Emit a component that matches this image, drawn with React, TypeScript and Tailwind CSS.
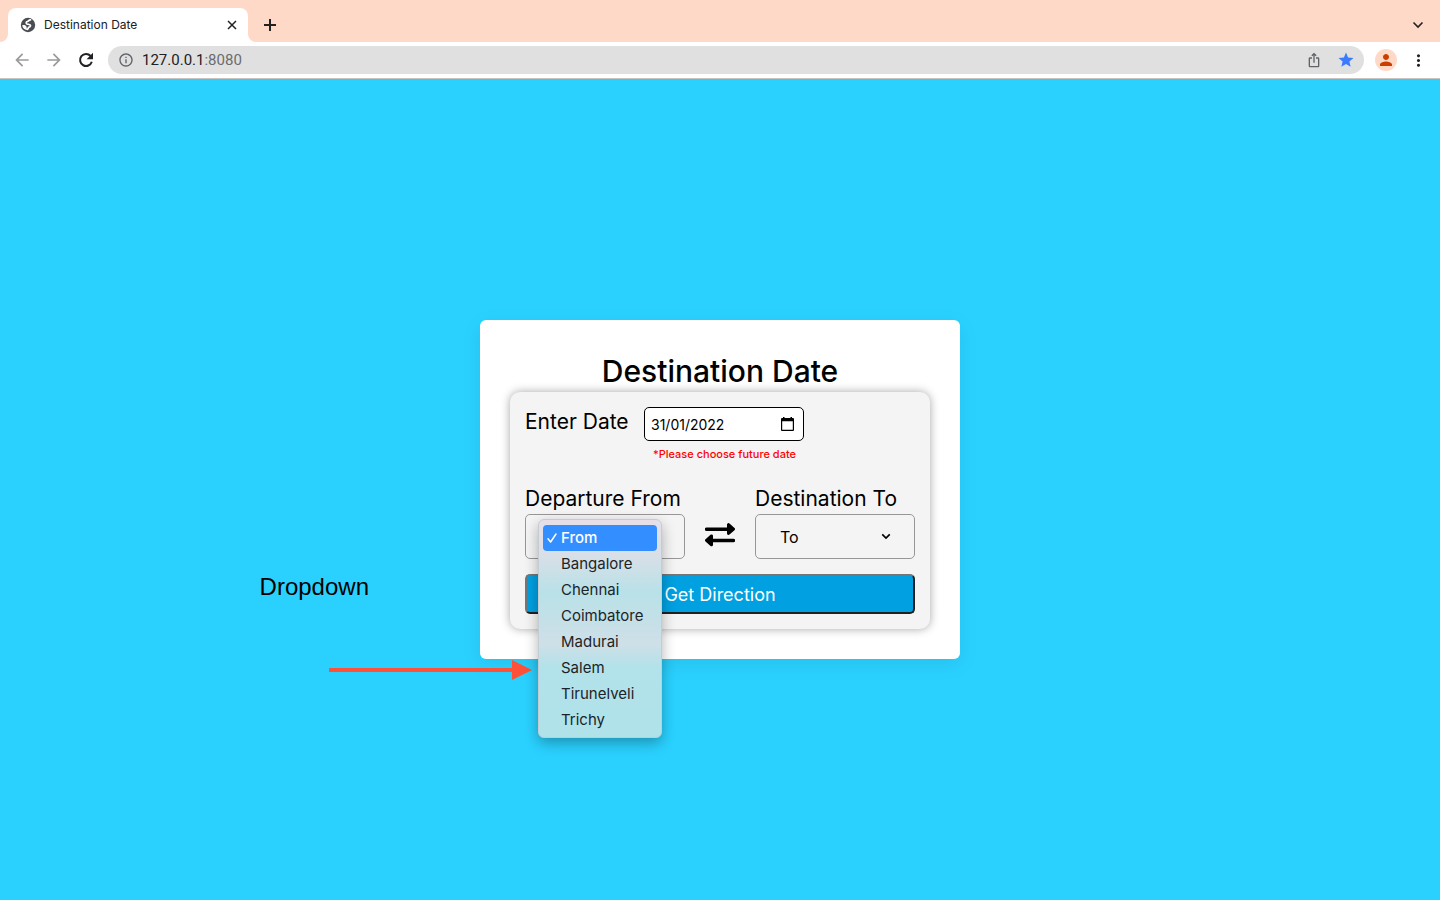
import { useState } from "react";
import { MdArrowBack, MdArrowForward, MdInfoOutline, MdIosShare, MdMoreVert, MdPerson, MdStar } from "react-icons/md";

const cities = ["Bangalore", "Chennai", "Coimbatore", "Madurai", "Salem", "Tirunelveli", "Trichy"];

function Chevron({ className }: { className: string }) {
  return (
    <svg viewBox="0 0 12 8" fill="none" stroke="currentColor" strokeWidth="2" className={className} aria-hidden="true">
      <path d="M1.5 1.5 6 6l4.500-4.500" />
    </svg>
  );
}

function TabStrip() {
  return (
    <div className="flex h-[42px] items-end bg-[#ffd9c7] pr-4">
      <svg viewBox="0 0 8 8" className="size-2 fill-white" aria-hidden="true">
        <path d="M8 0v8H0a8 8 0 0 0 8-8Z" />
      </svg>
      <div className="flex h-[34px] w-60 items-center rounded-t-lg bg-white pl-3 pr-[11px]">
        <svg viewBox="0 0 16 16" className="size-4" aria-hidden="true">
          <circle cx="8" cy="8" r="7.200" fill="#4a4d52" />
          <path
            d="M10.500 2.800C9 2.600 8.700 4.300 7.400 4.500 6 4.700 5.800 6.200 7 6.900c1 .5 2.500.2 3.300 1.200.6.900-.2 1.800-1.200 2-.900.2-.9 1.500-1.600 2.300"
            fill="none"
            stroke="#fff"
            strokeWidth="1.700"
            strokeLinecap="round"
          />
          <path d="M2.200 8.300c1.500-.5 3.200-.2 4 .9.700 1 .3 2.400 1.200 3.700-2.900.2-5-1.900-5.200-4.600Z" fill="#fff" />
        </svg>
        <span className="ml-2 flex-1 font-['Inter',sans-serif] text-[12px] text-[#202124]">Destination Date</span>
        <button type="button" aria-label="Close tab">
          <svg viewBox="0 0 10 10" className="size-[10px] stroke-[#202124]" strokeWidth="1.500" aria-hidden="true">
            <path d="m1 1 8 8M9 1 1 9" />
          </svg>
        </button>
      </div>
      <svg viewBox="0 0 8 8" className="size-2 fill-white" aria-hidden="true">
        <path d="M0 0v8h8a8 8 0 0 1-8-8Z" />
      </svg>
      <div className="flex h-[34px] flex-1 items-center justify-between pl-2">
        <button type="button" aria-label="New tab">
          <svg viewBox="0 0 12 12" className="size-3 stroke-[#202124]" strokeWidth="2" aria-hidden="true">
            <path d="M6 0v12M0 6h12" />
          </svg>
        </button>
        <button type="button" aria-label="Search tabs">
          <Chevron className="h-2 w-3 stroke-[1.6] text-[#202124]" />
        </button>
      </div>
    </div>
  );
}

function Toolbar() {
  return (
    <div className="flex h-[37px] items-center border-b border-[#c9c4c2] bg-white px-3">
      <button type="button" aria-label="Back">
        <MdArrowBack className="size-5 text-[#9b9b9b]" />
      </button>
      <button type="button" aria-label="Forward" className="ml-3">
        <MdArrowForward className="size-5 text-[#9b9b9b]" />
      </button>
      <button type="button" aria-label="Reload" className="ml-3">
        <svg viewBox="0 0 20 20" className="size-5" fill="none" aria-hidden="true">
          <path d="M14.600 6A6 6 0 1 0 15.800 11.800" stroke="#202124" strokeWidth="2" />
          <path d="M17 2.800v6.400h-6.400Z" fill="#202124" />
        </svg>
      </button>
      <div className="ml-3 flex h-7 flex-1 items-center rounded-full bg-[#e0e0e0] pr-[9px] pl-[10px]">
        <MdInfoOutline className="size-4 text-[#5f6368]" />
        <span className="ml-2 flex-1 font-['Roboto',sans-serif] text-[15px] leading-5 text-[#202124]">
          127.0.0.1<span className="text-[#6a6d71]">:8080</span>
        </span>
        <button type="button" aria-label="Share">
          <MdIosShare className="size-4 text-[#5f6368]" />
        </button>
        <button type="button" aria-label="Bookmark" className="ml-[15px]">
          <MdStar className="size-[18px] text-[#3b7cff]" />
        </button>
      </div>
      <button
        type="button"
        aria-label="Profile"
        className="ml-[11px] flex size-[22px] items-center justify-center rounded-full bg-[#ffd9c7]"
      >
        <MdPerson className="size-[18px] text-[#c93f00]" />
      </button>
      <button type="button" aria-label="Menu" className="ml-3">
        <MdMoreVert className="size-[19px] text-[#202124]" />
      </button>
    </div>
  );
}

function CityMenu({ onPick }: { onPick: (city: string) => void }) {
  return (
    <ul
      role="listbox"
      aria-label="Departure city"
      className="absolute top-[5px] left-[13px] z-10 w-[124px] rounded-md border border-[#c3ccd1] bg-[linear-gradient(to_bottom,#e6dfe9_0%,#dbdfe7_15%,#b9e1e8_33%,#c3e0e7_45%,#cfdfe7_57%,#b2e2ea_68%,#b0e2ea_100%)] px-1 pt-[5px] pb-1 font-['Inter',sans-serif] text-[15px] leading-[26px] text-[#1c2428] shadow-[0_5px_14px_rgba(0,0,0,0.3)]"
    >
      <li role="option" aria-selected="true" className="flex items-center rounded-[4px] bg-[#338fff] font-medium text-white">
        <svg viewBox="0 0 10 10" className="mx-1 size-[10px]" fill="none" stroke="currentColor" strokeWidth="1.500" aria-hidden="true">
          <path d="m1 5.800 2.600 3.200L9 1" strokeLinecap="round" strokeLinejoin="round" />
        </svg>
        From
      </li>
      {cities.map((city) => (
        <li key={city} role="option" aria-selected="false" onClick={() => onPick(city)} className="pl-[18px]">
          {city}
        </li>
      ))}
    </ul>
  );
}

function PlaceField({
  id,
  label,
  placeholder,
  open = false,
}: {
  id: string;
  label: string;
  placeholder: string;
  open?: boolean;
}) {
  const [value, setValue] = useState("");
  return (
    <div className="w-40">
      <label htmlFor={id} className="block text-[21px] leading-[30px] whitespace-nowrap">
        {label}
      </label>
      <div className="relative">
        <select
          id={id}
          value={value}
          onChange={(e) => setValue(e.target.value)}
          className="block h-[45px] w-full appearance-none rounded-[5px] border border-[#979797] bg-transparent pl-6 text-[16px]"
        >
          <option value="">{placeholder}</option>
          {cities.map((city) => (
            <option key={city}>{city}</option>
          ))}
        </select>
        <Chevron className="pointer-events-none absolute top-[19px] right-6 h-[7px] w-[10px]" />
        {open && <CityMenu onPick={setValue} />}
      </div>
    </div>
  );
}

function Annotation() {
  return (
    <>
      <p className="absolute top-[253px] right-full mr-[111px] font-['Liberation_Sans',Arial,sans-serif] text-[24px] leading-7">
        Dropdown
      </p>
      <svg viewBox="0 0 203 20" className="absolute top-[340px] -left-[151px] h-5 w-[203px] fill-[#ff5138]" aria-hidden="true">
        <path d="M0 8h183V0l20 10-20 10v-8H0Z" />
      </svg>
    </>
  );
}

export default function App() {
  const [date, setDate] = useState("31/01/2022");
  return (
    <div className="flex min-h-screen flex-col">
      <header>
        <TabStrip />
        <Toolbar />
      </header>
      <main className="flex flex-1 items-center justify-center bg-[#2ad1ff] font-['Inter',sans-serif] text-black">
        <div className="relative w-[480px] rounded-md bg-white p-[30px] shadow-[0_5px_20px_rgba(0,0,0,0.08)]">
          <h1 className="text-center text-[30px] leading-[42px] font-medium">Destination Date</h1>
          <form
            onSubmit={(e) => e.preventDefault()}
            className="rounded-[10px] bg-[#f4f4f4] p-[15px] shadow-[0_0_10px_rgba(0,0,0,0.35)]"
          >
            <div className="flex">
              <label htmlFor="date" className="w-[119px] text-[21px] leading-[30px]">
                Enter Date
              </label>
              <div className="w-40">
                <div className="relative">
                  <input
                    id="date"
                    value={date}
                    onChange={(e) => setDate(e.target.value)}
                    className="block h-[34px] w-full rounded-[5px] border border-black bg-white pl-[6px] text-[14px]"
                  />
                  <button type="button" aria-label="Open calendar" className="absolute top-[10px] right-[10px]">
                    <svg viewBox="0 0 13 14" className="h-[14px] w-[13px]" aria-hidden="true">
                      <path
                        fillRule="evenodd"
                        d="M2 0h1.500v1h6V0H11v1h1a1 1 0 0 1 1 1v11a1 1 0 0 1-1 1H1a1 1 0 0 1-1-1V2a1 1 0 0 1 1-1h1ZM1.200 4.200v8.600h10.600V4.200Z"
                      />
                    </svg>
                  </button>
                </div>
                <p className="pt-1 pl-[9px] text-[11px] leading-[18px] font-medium whitespace-nowrap text-[#ff0000]">
                  *Please choose future date
                </p>
              </div>
            </div>
            <div className="mt-[21px] flex items-end justify-between">
              <PlaceField id="from" label="Departure From" placeholder="From" open />
              <button type="button" aria-label="Swap places" className="mb-3">
                <svg viewBox="0 0 30 24" className="h-6 w-[30px]" aria-hidden="true">
                  <path d="M1.500 4.500H22V1.500a1.500 1.500 0 0 1 2.500-1l5 4.500a1.500 1.500 0 0 1 0 2.200l-5 4.400a1.500 1.500 0 0 1-2.500-1V8H1.500a1.500 1.500 0 0 1 0-3.500ZM28.500 15.800H8v-3a1.500 1.500 0 0 0-2.500-1l-5 4.500a1.500 1.500 0 0 0 0 2.200l5 4.400a1.500 1.500 0 0 0 2.500-1v-2.600h20.500a1.500 1.500 0 0 0 0-3.500Z" />
                </svg>
              </button>
              <PlaceField id="to" label="Destination To" placeholder="To" />
            </div>
            <button
              type="submit"
              className="mt-[15px] block h-10 w-full rounded-[5px] border-2 border-t-[#767676] border-r-[#212121] border-b-[#212121] border-l-[#767676] bg-[#00a0e1] text-[18px] text-white"
            >
              Get Direction
            </button>
          </form>
          <Annotation />
        </div>
      </main>
    </div>
  );
}
